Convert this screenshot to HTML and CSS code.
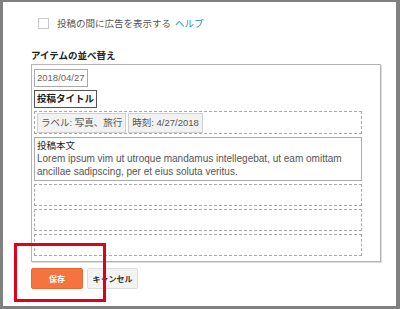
FILE: index.html
```html
<!DOCTYPE html>
<html lang="ja">
<head>
  <meta charset="UTF-8" />
  <meta name="viewport" content="width=device-width, initial-scale=1.0" />
  <title>アイテムの並べ替え</title>
  <link rel="stylesheet" href="styles.css">
</head>
<body>
  <div class="frame">
    <div class="ad-row">
      <span class="checkbox"></span>
      <span class="ad-label">投稿の間に広告を表示する</span>
      <a class="help" href="#">ヘルプ</a>
    </div>

    <h2 class="heading">アイテムの並べ替え</h2>

    <div class="sort-box">
      <div class="item date">2018/04/27</div>
      <div class="item title">投稿タイトル</div>
      <div class="row dashed chips">
        <span class="chip">ラベル: 写真、旅行</span>
        <span class="chip">時刻: 4/27/2018</span>
      </div>
      <div class="row body-box">
        <div class="body-title">投稿本文</div>
        <div class="body-text">Lorem ipsum vim ut utroque mandamus intellegebat, ut eam omittam ancillae sadipscing, per et eius soluta veritus.</div>
      </div>
      <div class="row dashed empty"></div>
      <div class="row dashed empty"></div>
      <div class="row dashed empty"></div>
    </div>

    <div class="actions">
      <button class="btn save">保存</button>
      <button class="btn cancel">キャンセル</button>
    </div>

    <!-- annotation box -->
    <div class="highlight"></div>
  </div>
</body>
</html>
```

FILE: styles.css
```css
body {
  margin: 0;
  font-family: "Liberation Sans", "Noto Sans CJK JP", sans-serif;
  font-size: 10px;
  color: #444;
}
.frame {
  position: relative;
  box-sizing: border-box;
  width: 400px;
  height: 309px;
  background: #fff;
  border-style: solid;
  border-color: #808080;
  border-width: 2px 4px 3px 3px;
  padding-left: 28px;
}
.ad-row {
  display: flex;
  align-items: center;
  height: 12px;
  margin: 15px 0 0 7px;
  font-size: 9.5px;
}
.checkbox {
  width: 9px;
  height: 9px;
  border: 1px solid #c8c8c8;
  margin-right: 8px;
}
.ad-label {
  color: #555;
}
.help {
  color: #2a8dbd;
  text-decoration: none;
  margin-left: 4px;
}
.heading {
  margin: 21px 0 0;
  font-size: 9.5px;
  line-height: 12px;
  font-weight: bold;
  color: #222;
}
.sort-box {
  width: 346px;
  height: 192px;
  margin-top: 2px;
  border: 1px solid #b4b4b4;
  box-shadow: 1px 1px 0 #dcdcdc;
  padding: 4px 0 0 2px;
  display: flex;
  flex-direction: column;
  align-items: flex-start;
  gap: 3px;
}
.item {
  border: 1px solid #aaa;
  padding: 0 2px;
  height: 16px;
  line-height: 16px;
}
.date {
  color: #666;
  font-size: 9.5px;
}
.title {
  border-color: #555;
  color: #222;
  font-weight: bold;
  font-size: 9.5px;
}
.row {
  box-sizing: border-box;
  width: 328px;
}
.dashed {
  border: 1px dashed #aaa;
}
.chips {
  height: 23px;
  display: flex;
  align-items: center;
  gap: 2px;
  padding-left: 2px;
}
.chip {
  background: #f2f2f2;
  border: 1px solid #d0d0d0;
  color: #555;
  font-size: 9.5px;
  height: 18px;
  line-height: 18px;
  padding: 0 3px;
}
.body-box {
  border: 1px solid #aaa;
  height: 44px;
  padding: 2px 2px 0;
}
.body-title {
  color: #222;
  font-size: 9.5px;
  line-height: 12px;
}
.body-text {
  color: #555;
  line-height: 13px;
}
.empty {
  height: 22px;
}
.actions {
  display: flex;
  gap: 4px;
  margin-top: 6px;
}
.btn {
  height: 21px;
  border: 1px solid #ddd;
  font-family: inherit;
  font-size: 8px;
  font-weight: bold;
  padding: 0;
  border-radius: 2px;
}
.save {
  width: 52px;
  background: #f4733f;
  border-color: #e8683a;
  color: #fff;
}
.cancel {
  width: 51px;
  background: #f3f3f3;
  color: #333;
}
.highlight {
  position: absolute;
  left: 11px;
  top: 241px;
  width: 86px;
  height: 53px;
  border: 3px solid #e0001c;
}
```
